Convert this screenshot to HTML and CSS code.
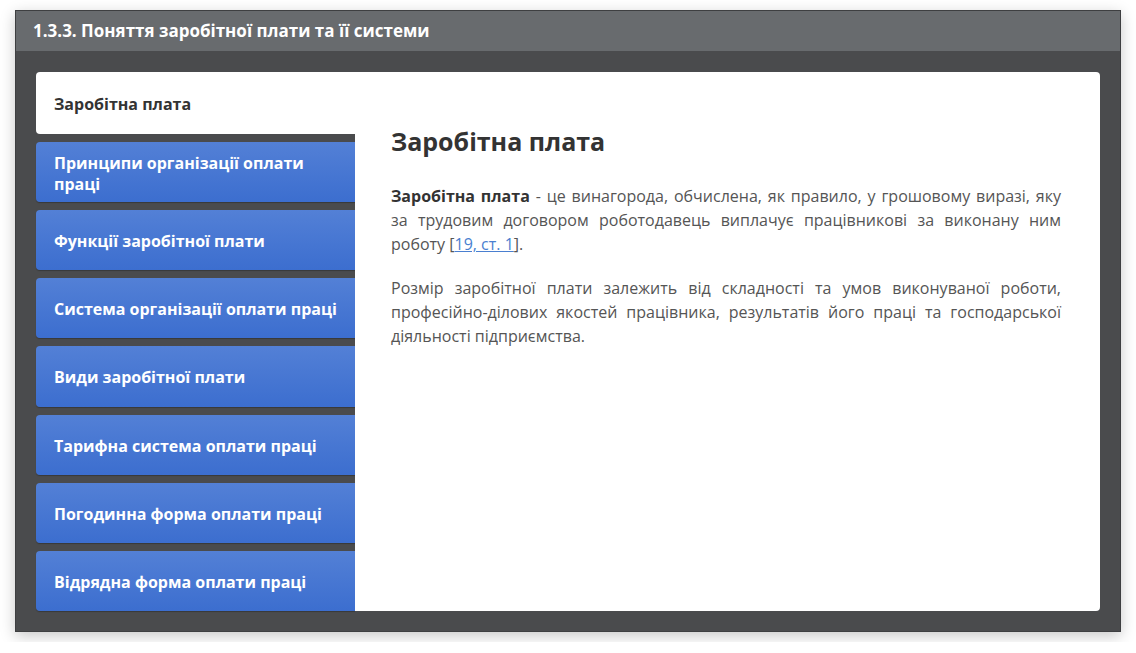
FILE: index.html
```html
<!DOCTYPE html>
<html lang="uk">
<head>
<meta charset="utf-8">
<link rel="stylesheet" href="styles.css">
</head>
<body>
<div class="frame">
  <div class="header">1.3.3. Поняття заробітної плати та її системи</div>
  <div class="body">
    <div class="panel">
      <div class="tabs">
        <div class="tab active">Заробітна плата</div>
        <div class="tab">Принципи організації оплати праці</div>
        <div class="tab">Функції заробітної плати</div>
        <div class="tab">Система організації оплати праці</div>
        <div class="tab">Види заробітної плати</div>
        <div class="tab">Тарифна система оплати праці</div>
        <div class="tab">Погодинна форма оплати праці</div>
        <div class="tab">Відрядна форма оплати праці</div>
      </div>
      <div class="content">
        <h1>Заробітна плата</h1>
        <p><b>Заробітна плата</b> - це винагорода, обчислена, як правило, у грошовому виразі, яку за трудовим договором роботодавець виплачує працівникові за виконану ним роботу [<a href="#">19, ст. 1</a>].</p>
        <p>Розмір заробітної плати залежить від складності та умов виконуваної роботи, професійно-ділових якостей працівника, результатів його праці та господарської діяльності підприємства.</p>
      </div>
    </div>
  </div>
</div>
</body>
</html>
```
FILE: styles.css
```css
html, body {
  margin: 0;
  padding: 0;
  background: #ffffff;
  font-family: "Open Sans", "Noto Sans", sans-serif;
}
body {
  padding: 10px 15px;
}
.frame {
  width: 1106px;
  height: 622px;
  box-sizing: border-box;
  border: 1px solid #3e3f41;
  background: #4a4b4d;
  box-shadow: 0 4px 14px rgba(0,0,0,0.22);
  display: flex;
  flex-direction: column;
}
.header {
  height: 40px;
  background: #686b6e;
  color: #ffffff;
  font-weight: 700;
  font-size: 17px;
  line-height: 40px;
  padding-left: 17px;
  flex: none;
}
.body {
  flex: 1;
  padding: 21px 20px 20px 20px;
}
.panel {
  display: flex;
  height: 539px;
}
.tabs {
  width: 319px;
  flex: none;
  display: flex;
  flex-direction: column;
  gap: 8px;
}
.tab {
  flex: 1 1 0;
  box-sizing: border-box;
  padding: 3px 18px 0 18px;
  display: flex;
  align-items: center;
  color: #ffffff;
  font-weight: 700;
  font-size: 16px;
  line-height: 21px;
  border-radius: 4px 0 0 4px;
  background: linear-gradient(#5380d6, #3c6ecf);
  box-shadow: 0 1px 1px rgba(0,0,0,0.25);
}
.tab.active {
  flex: 0 0 62px;
  background: #ffffff;
  color: #333333;
  box-shadow: none;
}
.content {
  flex: 1;
  background: #ffffff;
  border-radius: 0 4px 4px 0;
  padding: 0 39px 0 36px;
  color: #555555;
}
h1 {
  margin: 51px 0 25px 0;
  font-size: 25px;
  line-height: 36px;
  font-weight: 700;
  color: #333333;
}
p {
  margin: 0 0 20px 0;
  font-size: 16px;
  line-height: 24px;
  text-align: justify;
}
p b {
  color: #333333;
}
a {
  color: #4a7fd0;
}
```
